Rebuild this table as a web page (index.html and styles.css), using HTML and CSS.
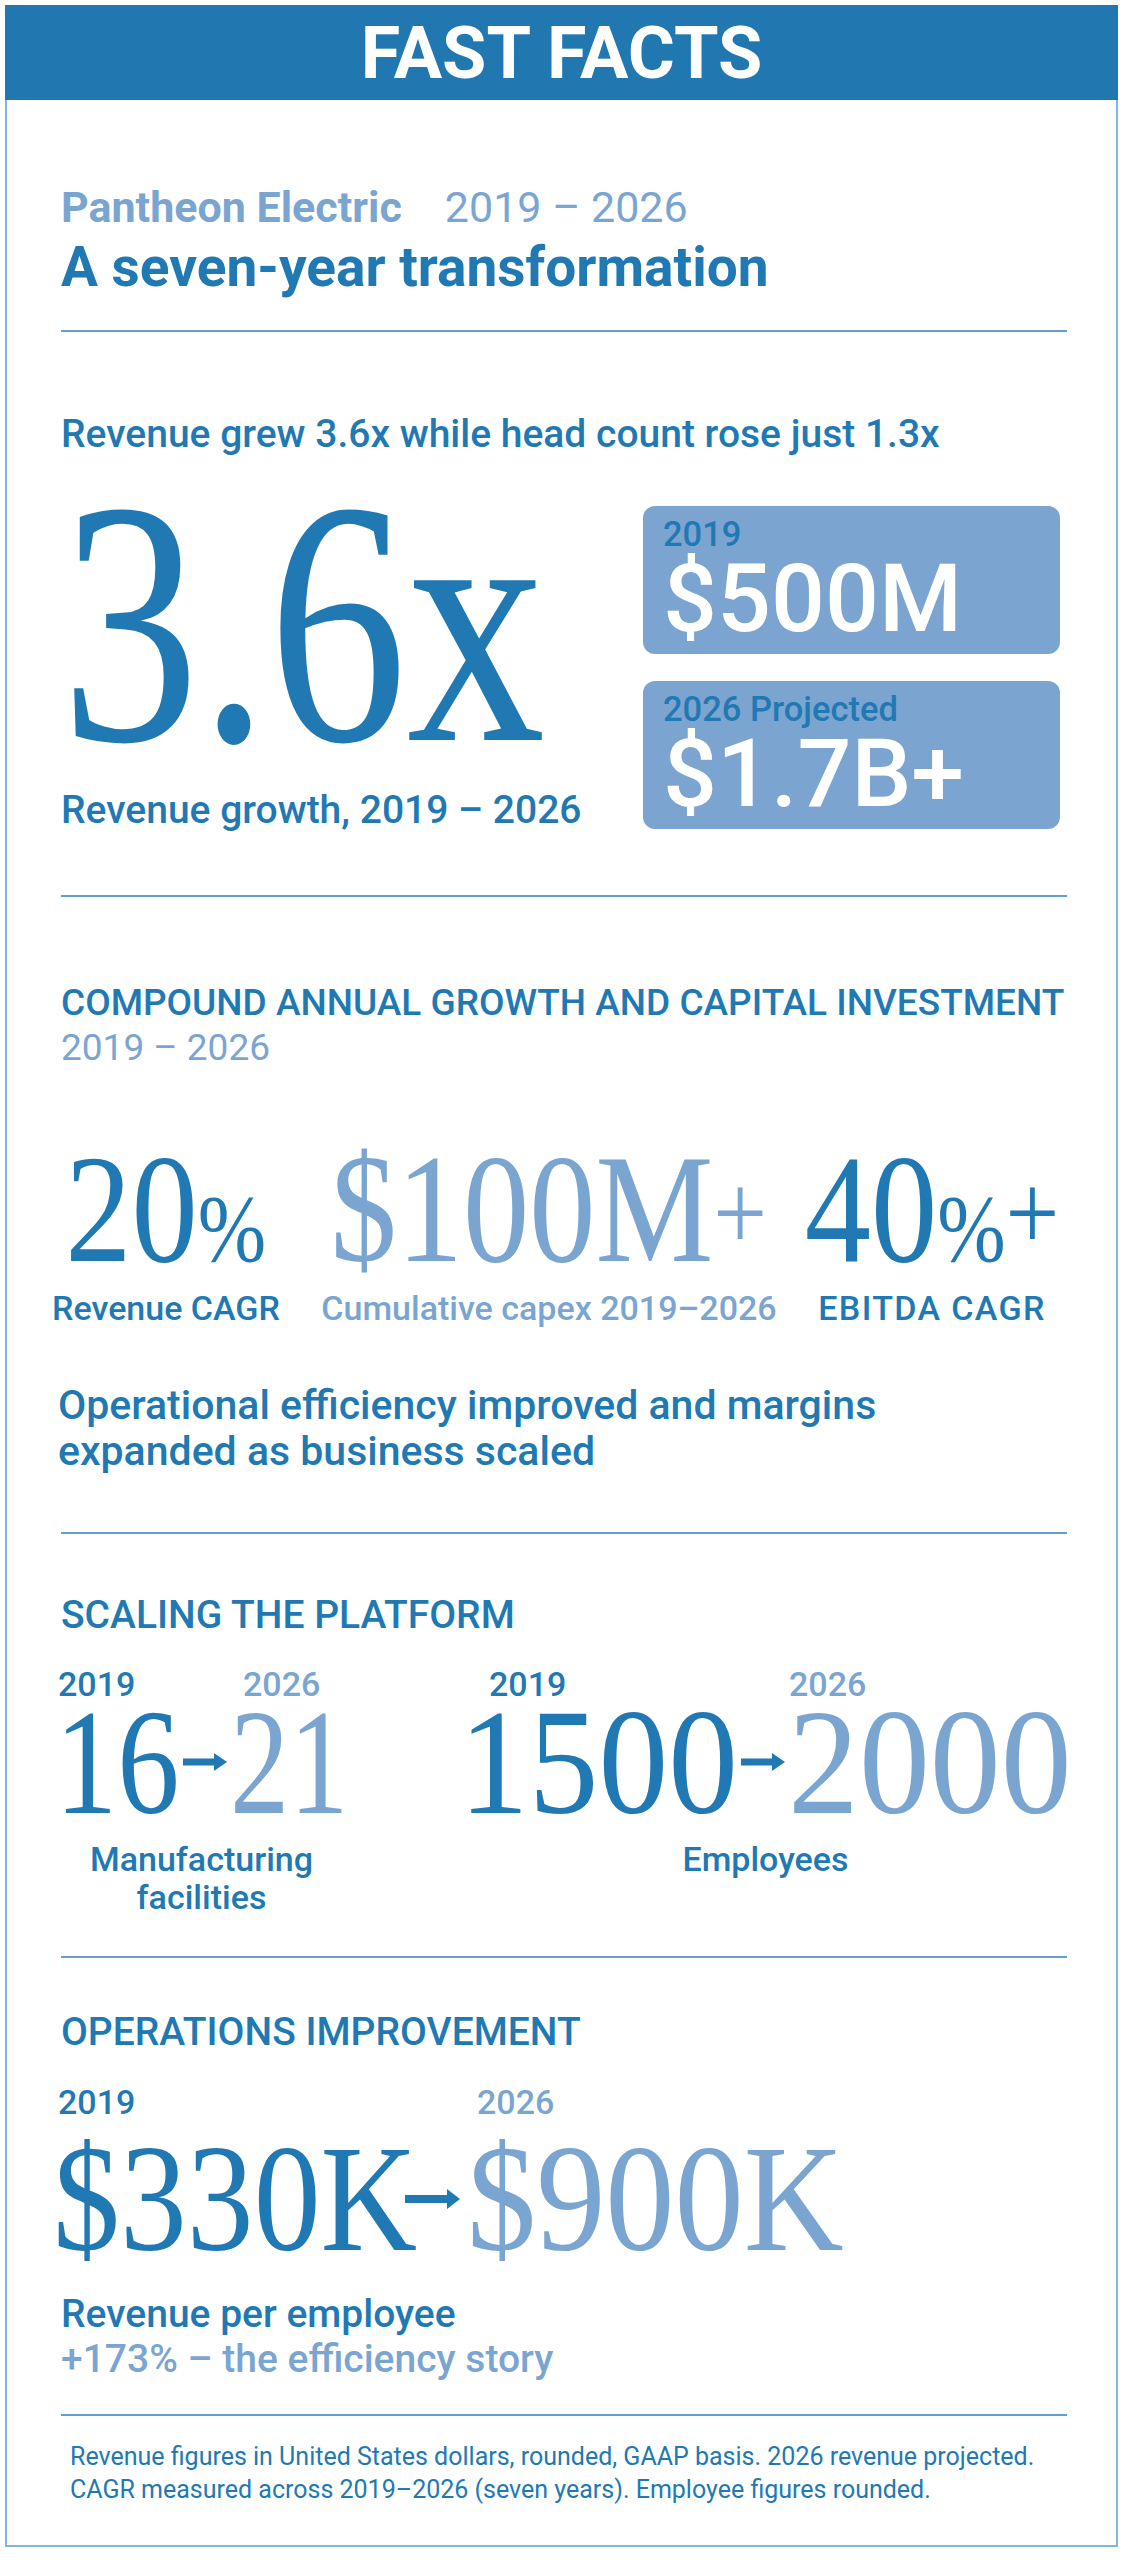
FILE: index.html
```html
<!DOCTYPE html>
<html lang="en">
<head>
<meta charset="utf-8">
<title>Fast Facts – Pantheon Electric</title>
<link rel="stylesheet" href="styles.css">
</head>
<body>
<div class="frame">
  <header class="banner"><h1 class="banner-title">FAST FACTS</h1></header>
  <main class="content">
    <section class="intro">
      <p class="brand">Pantheon Electric<span class="brand-years">2019 – 2026</span></p>
      <h2 class="title">A seven-year transformation</h2>
    </section>
    <hr class="rule rule-1">

    <section class="revenue">
      <p class="lead">Revenue grew 3.6x while head count rose just 1.3x</p>
      <div class="hero">
        <div class="hero-left">
          <div class="big-hero dark">3.6x</div>
          <p class="caption">Revenue growth, 2019 – 2026</p>
        </div>
        <div class="boxes">
          <div class="box">
            <div class="box-label">2019</div>
            <div class="box-value">$500M</div>
          </div>
          <div class="box">
            <div class="box-label">2026 Projected</div>
            <div class="box-value">$1.7B+</div>
          </div>
        </div>
      </div>
    </section>
    <hr class="rule rule-2">

    <section class="cagr-section">
      <h3 class="heading heading-cagr">COMPOUND ANNUAL GROWTH AND CAPITAL INVESTMENT</h3>
      <p class="subyears">2019 – 2026</p>
      <div class="cagr">
        <div class="cagr-item">
          <div class="cagr-num dark">20<span class="pct">%</span></div>
          <div class="cagr-label dark">Revenue CAGR</div>
        </div>
        <div class="cagr-item">
          <div class="cagr-num light">$100M<span class="plus">+</span></div>
          <div class="cagr-label light">Cumulative capex 2019–2026</div>
        </div>
        <div class="cagr-item">
          <div class="cagr-num dark">40<span class="pct">%</span><span class="plus">+</span></div>
          <div class="cagr-label cagr-label-wide dark">EBITDA CAGR</div>
        </div>
      </div>
      <p class="efficiency">Operational efficiency improved and margins expanded as business scaled</p>
    </section>
    <hr class="rule rule-3">

    <section class="scaling">
      <h3 class="heading heading-scaling">SCALING THE PLATFORM</h3>
      <div class="scale-row">
        <div class="group group-1">
          <div class="pair pair-1">
            <div class="yr dark yr-from yr-a">2019</div>
            <div class="yr light yr-to yr-b">2026</div>
            <div class="n dark n-from n16">16</div>
            <svg class="arrow arrow-s" width="44" height="18" viewBox="0 0 44 18" aria-hidden="true"><rect x="0" y="5.5" width="33" height="7" fill="#2179b3"/><polygon points="31,0 44,9 31,18" fill="#2179b3"/></svg>
            <div class="n light n-to n21">21</div>
          </div>
          <p class="group-label">Manufacturing<br>facilities</p>
        </div>
        <div class="group group-2">
          <div class="pair pair-2">
            <div class="yr dark yr-from yr-c">2019</div>
            <div class="yr light yr-to yr-d">2026</div>
            <div class="n dark n-from n1500">1500</div>
            <svg class="arrow arrow-s" width="44" height="18" viewBox="0 0 44 18" aria-hidden="true"><rect x="0" y="5.5" width="33" height="7" fill="#2179b3"/><polygon points="31,0 44,9 31,18" fill="#2179b3"/></svg>
            <div class="n light n-to n2000">2000</div>
          </div>
          <p class="group-label">Employees</p>
        </div>
      </div>
    </section>
    <hr class="rule rule-4">

    <section class="ops">
      <h3 class="heading heading-ops">OPERATIONS IMPROVEMENT</h3>
      <div class="ops-pair">
        <div class="yr dark yr-from yr-e">2019</div>
        <div class="yr light yr-to yr-f">2026</div>
        <div class="n n-ops dark n-from n330">$330K</div>
        <svg class="arrow arrow-o" width="55" height="20" viewBox="0 0 55 20" aria-hidden="true"><rect x="0" y="6" width="44" height="8" fill="#2179b3"/><polygon points="42,0 55,10 42,20" fill="#2179b3"/></svg>
        <div class="n n-ops light n-to n900">$900K</div>
      </div>
      <div class="rpe">
        <p class="rpe-main dark">Revenue per employee</p>
        <p class="rpe-sub light">+173% – the efficiency story</p>
      </div>
    </section>
    <hr class="rule rule-5">

    <p class="footnote">Revenue figures in United States dollars, rounded, GAAP basis. 2026 revenue projected.<br>CAGR measured across 2019–2026 (seven years). Employee figures rounded.</p>
  </main>
</div>
</body>
</html>
```

FILE: styles.css
```css
* {
  box-sizing: border-box;
  margin: 0;
  padding: 0;
}

body {
  margin: 0;
  background: #ffffff;
  font-family: Roboto, "Liberation Sans", Arial, sans-serif;
  color: #2179b3;
}

.dark { color: #2179b3; }
.light { color: #7ba5d1; }

.frame {
  width: 1113px;
  margin: 5px 0 0 5px;
  border: 2px solid #84b5dd;
  border-top: 0;
  padding-bottom: 39px;
}

.banner {
  height: 95px;
  margin: 0 -2px;
  background: #2178b0;
  display: flex;
  align-items: center;
  justify-content: center;
}

.banner-title {
  font-weight: 700;
  font-size: 72px;
  line-height: 70px;
  color: #ffffff;
  padding-top: 3px;
}

.content {
  padding: 0 49px 0 54px;
}

/* intro */
.brand {
  margin-top: 87px;
  font-weight: 700;
  font-size: 43px;
  line-height: 40px;
  color: #7ba5d1;
  white-space: nowrap;
}

.brand-years {
  font-weight: 400;
  margin-left: 43px;
}

.title {
  margin-top: 13px;
  font-weight: 700;
  font-size: 55px;
  line-height: 55px;
  color: #2179b3;
}

.rule {
  border: 0;
  height: 2px;
  background: #62a0d2;
}

.rule-1 { margin-top: 35px; }
.rule-2 { margin-top: 66px; }
.rule-3 { margin-top: 58px; }
.rule-4 { margin-top: 40px; }
.rule-5 { margin-top: 32px; }

/* revenue */
.lead {
  margin-top: 86px;
  font-weight: 500;
  font-size: 39px;
  line-height: 33px;
  white-space: nowrap;
}

.hero {
  margin-top: 33px;
  display: grid;
  grid-template-columns: 582px 417px;
}

.big-hero {
  font-family: "Liberation Serif", "DejaVu Serif", serif;
  font-weight: 400;
  font-size: 348px;
  line-height: 278px;
  white-space: nowrap;
  width: max-content;
  transform: scaleX(0.795);
  transform-origin: left center;
}

.caption {
  margin-top: 30px;
  font-weight: 500;
  font-size: 39px;
  line-height: 36px;
  white-space: nowrap;
}

.boxes {
  margin-top: 22px;
  display: flex;
  flex-direction: column;
  gap: 27px;
}

.box {
  background: #7ba4d0;
  border-radius: 12px;
  padding: 12px 20px 7px;
}

.box-label {
  font-weight: 500;
  font-size: 34.5px;
  line-height: 33px;
  color: #2179b3;
}

.box-value {
  font-weight: 500;
  font-size: 95px;
  line-height: 96px;
  color: #ffffff;
  white-space: nowrap;
}

/* headings */
.heading {
  font-weight: 500;
  font-size: 39px;
  line-height: 34px;
  color: #2179b3;
  white-space: nowrap;
}

.heading-cagr { margin-top: 89px; font-size: 37px; }
.heading-scaling { margin-top: 64px; }
.heading-ops { margin-top: 57px; }

.subyears {
  margin-top: 11px;
  font-weight: 400;
  font-size: 37px;
  line-height: 34px;
  color: #7ba5d1;
}

/* CAGR row */
.cagr {
  margin-top: 67px;
  margin-left: -15px;
  display: grid;
  grid-template-columns: repeat(3, 240px);
  column-gap: 143px;
}

.cagr-item {
  display: flex;
  flex-direction: column;
  align-items: center;
}

.cagr-num {
  font-family: "Liberation Serif", "DejaVu Serif", serif;
  font-weight: 400;
  font-size: 154px;
  line-height: 154px;
  white-space: nowrap;
  transform: scaleX(0.86);
  transform-origin: center center;
}

.pct {
  font-size: 0.62em;
  line-height: 1;
}

.plus {
  font-size: 0.72em;
  line-height: 1;
  vertical-align: 0.1em;
}

.cagr-label {
  margin-top: 6px;
  font-weight: 500;
  font-size: 34px;
  line-height: 32px;
  white-space: nowrap;
}

.cagr-label-wide {
  letter-spacing: 0.04em;
}

.efficiency {
  margin-top: 58px;
  margin-left: -3px;
  max-width: 900px;
  font-weight: 500;
  font-size: 41px;
  line-height: 46px;
}

/* scaling */
.scale-row {
  margin-top: 36px;
  display: flex;
  align-items: flex-start;
  column-gap: 111px;
}

.group {
  display: flex;
  flex-direction: column;
  align-items: center;
}

.group-1 { margin-left: -6px; }

.pair {
  display: grid;
  grid-template-rows: 32px 120px;
  grid-template-areas:
    "from . to"
    "nfrom arrow nto";
  row-gap: 2px;
}

.pair-1 { grid-template-columns: 125px 50px 118px; }
.pair-2 { grid-template-columns: 279px 50px 284px; }

.yr {
  font-weight: 500;
  font-size: 34px;
  line-height: 32px;
  white-space: nowrap;
}

.yr-from { grid-area: from; }
.yr-to { grid-area: to; }
.n-from { grid-area: nfrom; }
.n-to { grid-area: nto; }
.arrow { grid-area: arrow; align-self: center; display: block; }
.arrow-s { justify-self: center; }
.arrow-o { justify-self: start; }

.yr-a { padding-left: 3px; }
.yr-b { padding-left: 13px; }
.yr-c { padding-left: 30px; }
.yr-d { padding-left: 1px; }
.yr-e { padding-left: 5px; }
.yr-f { padding-left: 10px; }

.n {
  font-family: "Liberation Serif", "DejaVu Serif", serif;
  font-weight: 400;
  font-size: 150px;
  line-height: 120px;
  white-space: nowrap;
  transform-origin: left center;
}

.n16 { transform: scaleX(0.83); }
.n21 { transform: scaleX(0.79); }
.n1500 { transform: scaleX(0.93); }
.n2000 { transform: scaleX(0.945); }

.group-label {
  margin-top: 18px;
  font-weight: 500;
  font-size: 34px;
  line-height: 38px;
  text-align: center;
  white-space: nowrap;
}

/* operations */
.ops-pair {
  margin-top: 37px;
  margin-left: -8px;
  display: grid;
  grid-template-columns: 352px 62px 377px;
  grid-template-rows: 32px 122px;
  grid-template-areas:
    "from . to"
    "nfrom arrow nto";
  row-gap: 20px;
}

.n-ops {
  font-size: 152px;
  line-height: 122px;
}

.n330 { transform: scaleX(0.88); }
.n900 { transform: scaleX(0.91); }

.rpe {
  margin-top: 32px;
  font-weight: 500;
  font-size: 39px;
  line-height: 45px;
}

.footnote {
  margin-top: 24px;
  padding-left: 9px;
  font-weight: 400;
  font-size: 25px;
  line-height: 33px;
  color: #2179b3;
  white-space: nowrap;
}
```
